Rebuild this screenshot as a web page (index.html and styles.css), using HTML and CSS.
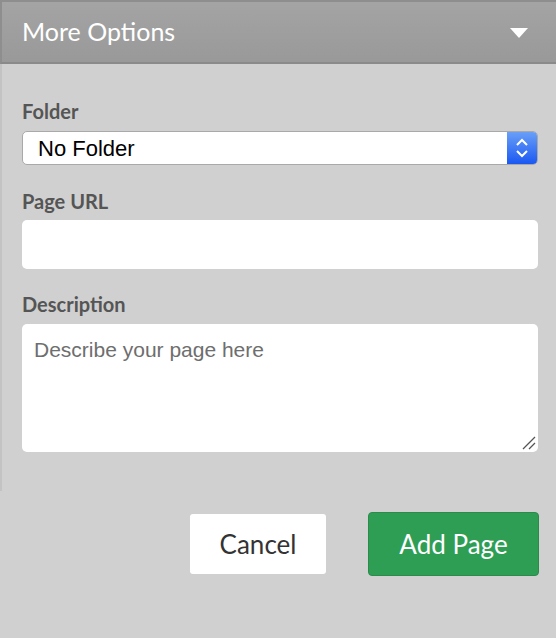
FILE: index.html
```html
<!DOCTYPE html>
<html lang="en">
<head>
<meta charset="utf-8">
<title>Add Page</title>
<link rel="stylesheet" href="styles.css">
</head>
<body>
  <section class="options">
    <header class="options-head">
      <h2 class="options-title">More Options</h2>
      <svg class="caret" width="18" height="10" viewBox="0 0 18 10"><path d="M0 0H18L9 10Z" fill="#fff"/></svg>
    </header>
    <div class="options-body">
      <label class="field field-folder">
        <span class="field-label">Folder</span>
        <span class="select-wrap">
          <select class="select">
            <option>No Folder</option>
          </select>
          <span class="stepper">
            <svg width="14" height="20" viewBox="0 0 14 20"><path d="M2 7L7 2L12 7M2 13L7 18L12 13" fill="none" stroke="#fff" stroke-width="2"/></svg>
          </span>
        </span>
      </label>
      <label class="field field-url">
        <span class="field-label">Page URL</span>
        <input class="text-input" type="text">
      </label>
      <label class="field field-desc">
        <span class="field-label">Description</span>
        <span class="area-wrap">
          <textarea class="text-area" placeholder="Describe your page here"></textarea>
          <svg class="grip" width="14" height="14" viewBox="0 0 14 14"><path d="M1 13L13 1M7 13L13 7" stroke="#555" stroke-width="1.3" fill="none"/></svg>
        </span>
      </label>
    </div>
  </section>
  <footer class="actions">
    <button class="btn btn-cancel" type="button">Cancel</button>
    <button class="btn btn-add" type="button">Add Page</button>
  </footer>
</body>
</html>
```
FILE: styles.css
```css
html, body {
  margin: 0;
  padding: 0;
}

body {
  width: 556px;
  height: 638px;
  background: #d0d0d0;
  font-family: Lato, "Liberation Sans", sans-serif;
  overflow: hidden;
}

.options {
  border-left: 2px solid #c3c3c3;
  height: 491px;
  box-sizing: border-box;
}

.options-head {
  display: flex;
  align-items: center;
  justify-content: space-between;
  height: 64px;
  box-sizing: border-box;
  margin-left: -2px;
  padding: 0 28px 0 20px;
  border-top: 2px solid #8e8e8e;
  border-left: 2px solid #8e8e8e;
  border-bottom: 2px solid #8a8a8a;
  background: linear-gradient(#a4a4a4, #999999);
}

.options-title {
  margin: 0 0 2px 0;
  font-size: 25px;
  font-weight: 400;
  color: #fff;
}

.caret {
  display: block;
  margin-top: 1px;
}

.options-body {
  padding: 33px 18px 0 20px;
  display: flex;
  flex-direction: column;
}

.field {
  display: flex;
  flex-direction: column;
}

.field-label {
  font-size: 20px;
  font-weight: 700;
  color: #555;
  line-height: 24px;
  padding-top: 2px;
  margin-bottom: 8px;
}

.field-url .field-label {
  margin-bottom: 7px;
}

.field-url {
  margin-top: 22px;
}

.field-desc {
  margin-top: 21px;
}

.select-wrap {
  display: flex;
  height: 34px;
  box-sizing: border-box;
  border: 1px solid #a9a9a9;
  border-radius: 5px;
  background: #fff;
  overflow: hidden;
}

.select {
  flex: 1;
  appearance: none;
  -webkit-appearance: none;
  border: 0;
  outline: 0;
  background: transparent;
  padding: 0 0 0 15px;
  font-family: "Liberation Sans", Arial, sans-serif;
  font-size: 22px;
  color: #000;
}

.stepper {
  width: 30px;
  display: flex;
  align-items: center;
  justify-content: center;
  background: linear-gradient(#6a9ff7, #1a58f2);
}

.stepper svg {
  display: block;
}

.text-input {
  height: 49px;
  box-sizing: border-box;
  border: 0;
  border-radius: 5px;
  background: #fff;
  outline: 0;
  padding: 0 12px;
  font-family: "Liberation Sans", Arial, sans-serif;
  font-size: 21px;
}

.area-wrap {
  position: relative;
  display: flex;
}

.text-area {
  flex: 1;
  height: 128px;
  box-sizing: border-box;
  border: 0;
  border-radius: 5px;
  background: #fff;
  outline: 0;
  padding: 13px 12px;
  font-family: "Liberation Sans", Arial, sans-serif;
  font-size: 21px;
  line-height: 25px;
  resize: none;
}

.text-area::placeholder {
  color: #6e6e6e;
}

/* resize grip drawn over the textarea's bottom-right corner */
.grip {
  position: absolute;
  right: 2px;
  bottom: 2px;
  pointer-events: none;
}

.actions {
  display: flex;
  justify-content: flex-end;
  align-items: center;
  gap: 42px;
  padding: 21px 17px 0 0;
}

.btn {
  font-family: Lato, "Liberation Sans", sans-serif;
  font-size: 26px;
  border-radius: 4px;
  cursor: pointer;
}

.btn-cancel {
  width: 136px;
  height: 60px;
  background: #fff;
  border: 0;
  border-radius: 3px;
  color: #333;
}

.btn-add {
  width: 171px;
  height: 64px;
  background: #2e9e55;
  border: 1px solid #2a8b4b;
  color: #fff;
}
```
